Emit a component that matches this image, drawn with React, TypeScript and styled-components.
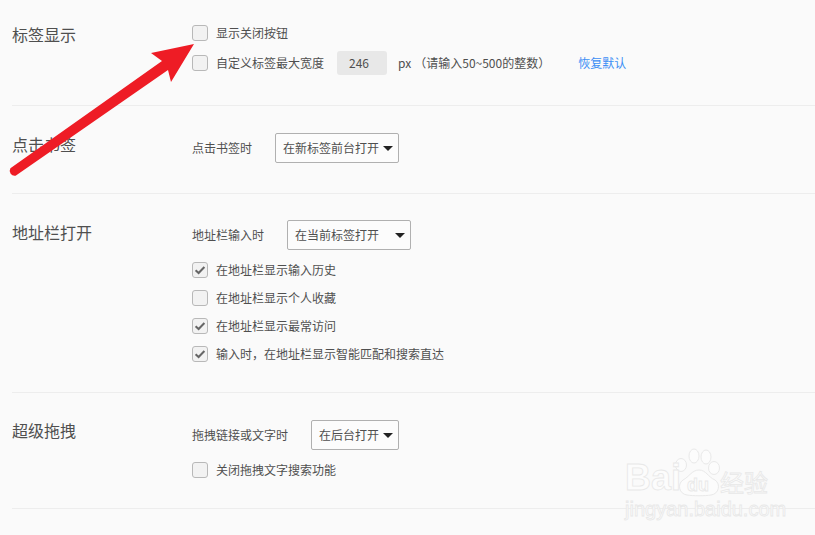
import React from "react";
import styled, { createGlobalStyle } from "styled-components";

const GlobalStyle = createGlobalStyle`
  html, body {
    margin: 0;
    padding: 0;
    background: #fafafa;
    overflow: hidden;
  }
`;

function CheckRow({ checked, children }: { checked?: boolean; children: React.ReactNode }) {
  return (
    <Row>
      <CheckBox>
        {checked && (
          <svg width="14" height="14" viewBox="0 0 14 14">
            <path d="M2.6 7.2 L5.6 10 L11.4 4" fill="none" stroke="#666" strokeWidth="2" />
          </svg>
        )}
      </CheckBox>
      <Label>{children}</Label>
    </Row>
  );
}

function Dropdown({ width, children }: { width: number; children: React.ReactNode }) {
  return (
    <Select $width={width}>
      <Label>{children}</Label>
      <Caret />
    </Select>
  );
}

function Arrow() {
  return (
    <ArrowSvg width="200" height="180" viewBox="0 0 200 180">
      <path
        d="M10.4 168.3 L162 61 L151 53 L194 44 L171 82 L168 70 L15.6 175.7 A 5 5 0 0 1 10.4 168.3 Z"
        fill="#ee1c25"
      />
    </ArrowSvg>
  );
}

function Watermark() {
  return (
    <Mark>
      <Paw width="60" height="56" viewBox="0 0 60 56">
        <g fill="#fcfcfc" stroke="#e9e9e9" strokeWidth="1">
          <ellipse cx="10" cy="21" rx="5.5" ry="6.5" />
          <ellipse cx="23" cy="12" rx="5" ry="7" />
          <ellipse cx="35" cy="13" rx="5" ry="7" />
          <ellipse cx="43" cy="24" rx="5.5" ry="6.5" />
          <path d="M28 26 C35 26 37 33 44 36 C50 40 48 50 40 51 C34 52 22 52 16 51 C8 50 6 40 12 36 C18 33 21 26 28 26 Z" />
        </g>
      </Paw>
      <MarkBai>Bai</MarkBai>
      <MarkDu>du</MarkDu>
      <MarkJy>经验</MarkJy>
      <MarkUrl>jingyan.baidu.com</MarkUrl>
    </Mark>
  );
}

export default function App() {
  return (
    <Page>
      <GlobalStyle />
      <Section $top={25}>
        <Title $shift={-3}>标签显示</Title>
        <Content $gap={10}>
          <CheckRow>显示关闭按钮</CheckRow>
          <Row>
            <CheckBox />
            <Label>自定义标签最大宽度</Label>
            <WidthInput>246</WidthInput>
            <Unit>px</Unit>
            <Hint>（请输入50~500的整数）</Hint>
            <ResetLink>恢复默认</ResetLink>
          </Row>
        </Content>
      </Section>
      <Section $top={27}>
        <Title $shift={-1}>点击书签</Title>
        <Content>
          <SelectRow>
            <Label>点击书签时</Label>
            <Dropdown width={124}>在新标签前台打开</Dropdown>
          </SelectRow>
        </Content>
      </Section>
      <Section $top={26}>
        <Title>地址栏打开</Title>
        <Content>
          <SelectRow>
            <Label>地址栏输入时</Label>
            <Dropdown width={124}>在当前标签打开</Dropdown>
          </SelectRow>
          <CheckRow checked>在地址栏显示输入历史</CheckRow>
          <CheckRow>在地址栏显示个人收藏</CheckRow>
          <CheckRow checked>在地址栏显示最常访问</CheckRow>
          <CheckRow checked>输入时，在地址栏显示智能匹配和搜索直达</CheckRow>
        </Content>
      </Section>
      <Section $top={27}>
        <Title $shift={-2}>超级拖拽</Title>
        <Content>
          <SelectRow>
            <Label>拖拽链接或文字时</Label>
            <Dropdown width={88}>在后台打开</Dropdown>
          </SelectRow>
          <CheckRow>关闭拖拽文字搜索功能</CheckRow>
        </Content>
      </Section>
      <Arrow />
      <Watermark />
    </Page>
  );
}

const Page = styled.div`
  position: relative;
  width: 815px;
  height: 535px;
  overflow: hidden;
  background: #fafafa;
  color: #4f4f4f;
  font-family: "Noto Sans CJK SC", "Noto Sans", sans-serif;
  font-size: 12px;
`;

const Section = styled.section<{ $top: number }>`
  display: flex;
  margin-left: 12px;
  padding: ${({ $top }) => $top}px 0 30px;
  border-bottom: 1px solid #ededed;
`;

const Title = styled.h2<{ $shift?: number }>`
  flex: 0 0 180px;
  margin: ${({ $shift }) => $shift ?? 0}px 0 0;
  font-size: 16px;
  font-weight: 400;
  line-height: 24px;
  color: #4f4f4f;
`;

const Content = styled.div<{ $gap?: number }>`
  display: flex;
  flex-direction: column;
  gap: ${({ $gap }) => $gap ?? 12}px;
`;

const Row = styled.div`
  display: flex;
  align-items: center;
  white-space: nowrap;
`;

const SelectRow = styled(Row)`
  gap: 23px;
`;

const Label = styled.span`
  line-height: 16px;
`;

const CheckBox = styled.span`
  display: flex;
  flex: 0 0 16px;
  box-sizing: border-box;
  width: 16px;
  height: 16px;
  margin-right: 8px;
  align-items: center;
  justify-content: center;
  background: #f2f2f2;
  border: 1px solid #b8b8b8;
  border-radius: 3px;
`;

const WidthInput = styled.span`
  box-sizing: border-box;
  width: 50px;
  height: 24px;
  margin-left: 13px;
  padding-left: 12px;
  line-height: 23px;
  background: #e8e8e8;
  border-radius: 3px;
`;

const Unit = styled(Label)`
  margin-left: 11px;
`;

const Hint = styled(Label)`
  margin-left: 3px;
`;

const ResetLink = styled(Label)`
  margin-left: 28px;
  color: #3d8ff5;
`;

const Select = styled.div<{ $width: number }>`
  display: flex;
  box-sizing: border-box;
  width: ${({ $width }) => $width}px;
  height: 30px;
  padding: 0 5px 0 7px;
  align-items: center;
  justify-content: space-between;
  background: #fcfcfc;
  border: 1px solid #b0b0b0;
  border-radius: 2px;
`;

const Caret = styled.i`
  width: 0;
  height: 0;
  border-top: 5px solid #222;
  border-left: 5px solid transparent;
  border-right: 5px solid transparent;
`;

const ArrowSvg = styled.svg`
  position: absolute;
  left: 0;
  top: 0;
`;

const Mark = styled.div`
  position: absolute;
  left: 620px;
  top: 445px;
  width: 160px;
  height: 80px;
  color: #fcfcfc;
  -webkit-text-stroke: 0.8px #e8e8e8;
  font-family: "Liberation Sans", sans-serif;
`;

const Paw = styled.svg`
  position: absolute;
  left: 51px;
  top: -1px;
`;

const MarkBai = styled.span`
  position: absolute;
  left: 5px;
  top: 15px;
  font-size: 36px;
  font-weight: 700;
  line-height: 36px;
`;

const MarkDu = styled.span`
  position: absolute;
  left: 67px;
  top: 31px;
  font-size: 18px;
  font-weight: 700;
  line-height: 18px;
`;

const MarkJy = styled.span`
  position: absolute;
  left: 100px;
  top: 24px;
  font-family: "Noto Sans CJK SC", sans-serif;
  font-size: 24px;
  line-height: 26px;
`;

const MarkUrl = styled.span`
  position: absolute;
  left: 5px;
  top: 53px;
  font-size: 20px;
  line-height: 22px;
  white-space: nowrap;
`;
